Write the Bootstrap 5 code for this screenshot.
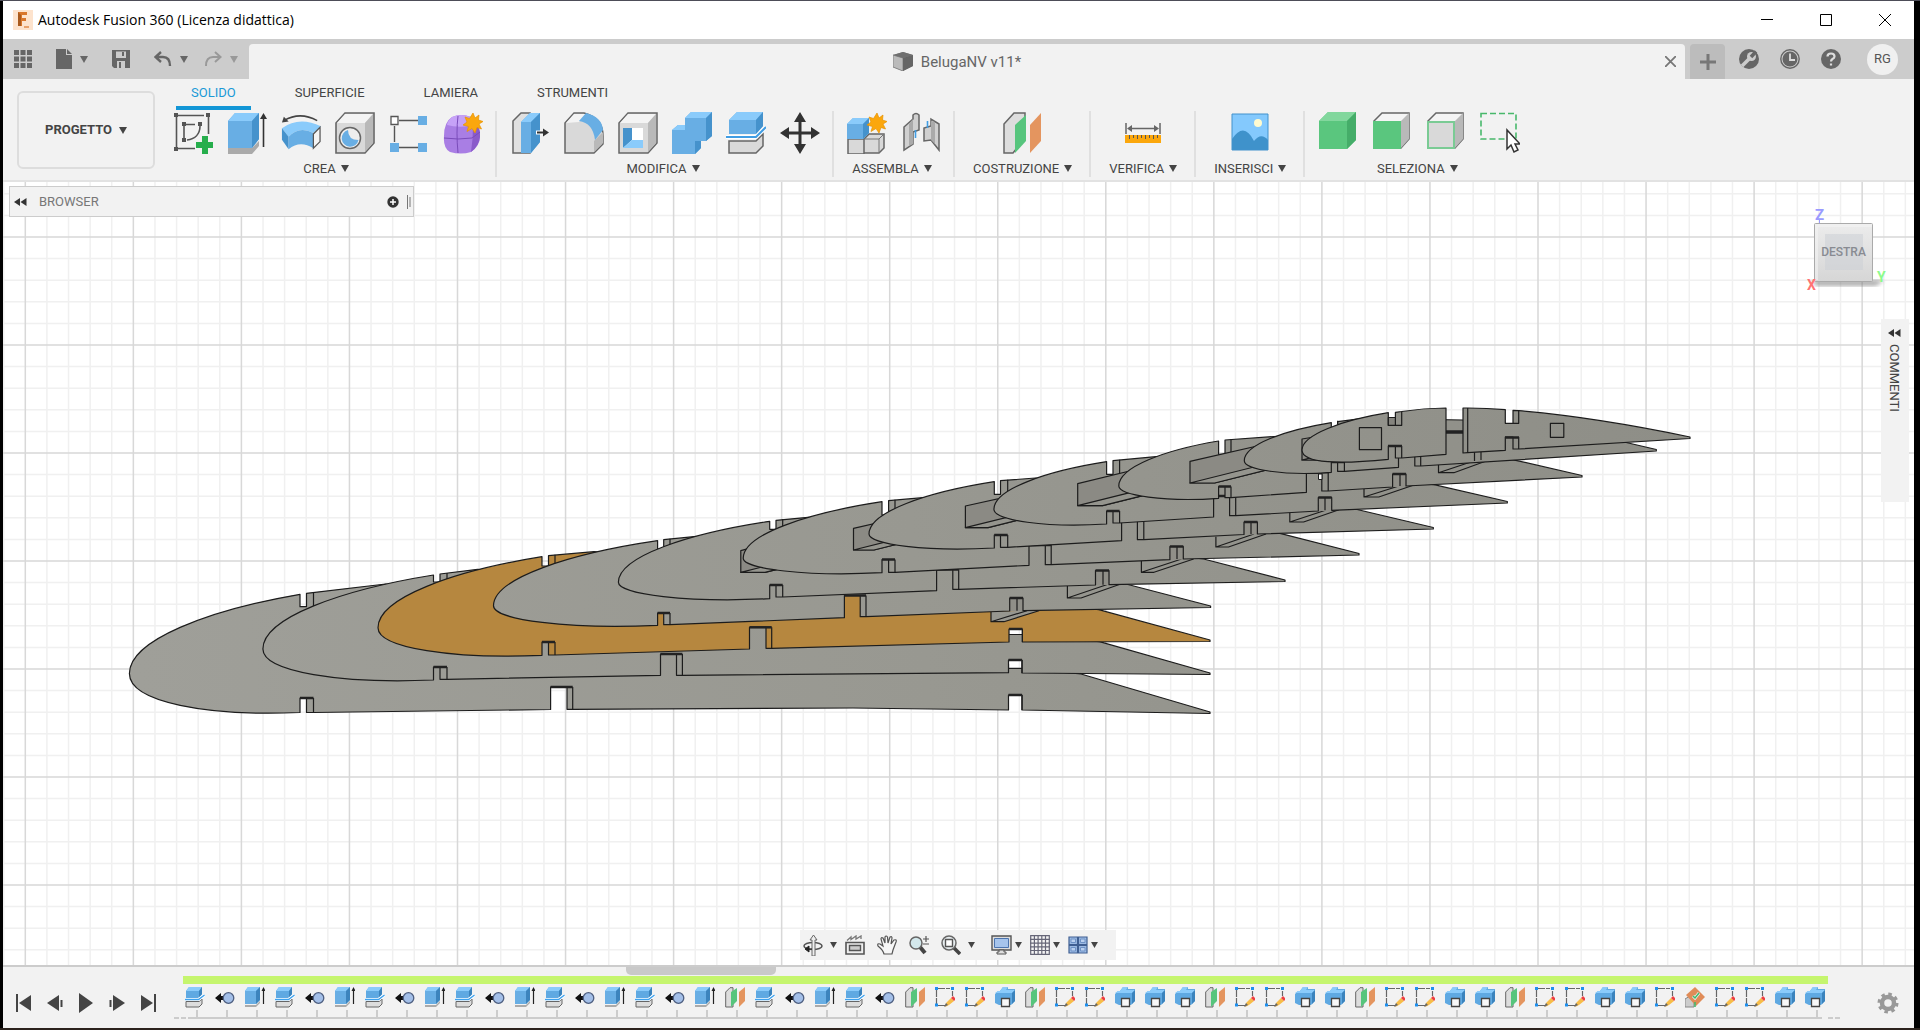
<!DOCTYPE html>
<html lang="it">
<head>
<meta charset="utf-8">
<meta name="viewport" content="width=device-width, initial-scale=1">
<title>Autodesk Fusion 360 (Licenza didattica)</title>
<link href="https://cdn.jsdelivr.net/npm/bootstrap@5.3.0/dist/css/bootstrap.min.css" rel="stylesheet">
<style>
  body { font-family: Roboto, "Liberation Sans", sans-serif; font-size: 13px; line-height: 16px; color: #444; background: #000; }
  svg { display: block; flex: none; }
  .frame { padding: 1px 6px 2px 3px; border-top: 0; background: linear-gradient(#4d4d58 1px, #000 1px calc(100% - 2px), #2b221d calc(100% - 2px)); }
  .tool { display: inline-flex; align-items: center; justify-content: center; padding: 0; border: 0; border-radius: 3px; background: transparent; color: inherit; font-size: 13px; line-height: 16px; }
  .titlebar { height: 38px; background: #fff; color: #000; font-family: "Open Sans", sans-serif; font-size: 14px; line-height: 20px; padding-left: 10px; gap: 5px; }
  .titlebar .tool { width: 59px; height: 38px; color: #000; }
  .docbar { height: 40px; background: #ccc; padding-top: 5px; color: #666; }
  .quick { width: 246px; padding: 0 8px 5px 11px; }
  .doctab { background: #f2f2f2; border-radius: 4px 4px 0 0; font-size: 15px; line-height: 20px; padding-right: 9px; }
  .newtab { width: 35px; height: 35px; background: #bcbcbc; border-radius: 4px 4px 0 0; margin: 0 14px 0 5px; color: #777; }
  .account { gap: 21px; padding: 0 16px 5px 0; }
  .avatar { width: 31px; height: 31px; border-radius: 50%; background: #f0f0f0; margin-left: 5px; font-size: 13px; color: #555; }
  .ribbon { background: #f2f2f2; height: 103px; border-bottom: 2px solid #e2e2e2; padding-left: 14px; }
  .workspace { width: 138px; height: 78px; border: 2px solid #ddd; border-radius: 6px; margin: 12px 5px 0 0; font-weight: 700; gap: 7px; color: #444; }
  .modes { height: 31px; gap: 29px; padding: 6px 0 0 16px; }
  .modes a { color: #444; padding: 0 15px 6px; border-bottom: 4px solid transparent; text-decoration: none; }
  .modes a.active { color: #1a9ad7; border-color: #1396d6; }
  .panel-group { height: 66px; border-right: 2px solid #e0e0e0; padding: 0 5px 0 6px; margin-top: 1px; }
  .panel-group.solo { padding: 0 17px 0 18px; }
  .panel-group.final { border-right: 0; }
  .panel-group .tool.big { width: 54px; height: 44px; }
  .panel-group .tool.name { gap: 5px; height: 20px; margin-top: 5px; padding-right: 4px; white-space: nowrap; }
  .panel-group.solo .tool.name { padding-right: 0; }
  .stage { background: #fff; min-height: 0; }
  .scene { position: absolute; inset: 0; width: 100%; height: 100%; }
  .browser { position: absolute; left: 6px; top: 4px; width: 405px; height: 31px; background: #f2f2f2; border: 1px solid #ccc; color: #777; padding: 0 2px 0 4px; gap: 12px; }
  .comments { position: absolute; right: 5px; top: 137px; width: 28px; height: 183px; background: #f2f2f2; padding: 10px 2px 0 0; gap: 7px; color: #444; }
  .comments .tool { writing-mode: vertical-rl; }
  .viewcube { position: absolute; right: 22px; top: 22px; }
  .navtools { position: absolute; left: 50%; bottom: 5px; margin-left: -159px; width: 316px; height: 30px; background: #f2f2f2; padding: 0 3px; gap: 8px; color: #444; }
  .navtools .tool { gap: 3px; }
  .navtools .tool.wide { gap: 7px; }
  .navtools .tool.plain { margin-right: 4px; }
  .timeline { background: #f2f2f2; height: 63px; border-top: 2px solid #ccc; }
  .scroller { position: absolute; left: 623px; top: 0; width: 150px; height: 8px; background: #c9c9c9; border-radius: 0 0 5px 5px; }
  .player { width: 180px; padding: 22px 0 0 5px; }
  .player .tool { width: 31px; height: 28px; flex: none; }
  .track { width: 1645px; padding-top: 9px; }
  .marker { height: 8px; background: #c5f56e; }
  .feature { width: 30px; height: 34px; flex: none; position: relative; padding: 3px 7px 0 0; }
  .feature::after { content: ""; position: absolute; left: 13px; bottom: 0; width: 2px; height: 8px; background: #ccc; }
  .rail { height: 2px; background: #ccc; margin: -1px 6px 0 5px; }
  .rail::before, .rail::after { content: ""; position: absolute; width: 12px; height: 2px; background: linear-gradient(90deg, #ccc 5px, transparent 5px 7px, #ccc 7px); }
  .rail::before { margin-left: -14px; }
  .rail::after { right: 74px; }
  .prefs { margin: 9px 15px 0 auto; }
</style>
</head>
<body class="overflow-hidden">

<svg width="0" height="0" class="position-absolute" aria-hidden="true">
  <defs>
    <linearGradient id="gCube" x1="0" y1="0" x2="0" y2="1"><stop offset="0" stop-color="#ececec"/><stop offset="1" stop-color="#d6d6d6"/></linearGradient>
    <linearGradient id="gMetal" gradientUnits="userSpaceOnUse" x1="130" y1="600" x2="1690" y2="440"><stop offset="0" stop-color="#9f9f99"/><stop offset=".5" stop-color="#989891"/><stop offset="1" stop-color="#8e8e87"/></linearGradient>
    <symbol id="caret" viewBox="0 0 8 7"><path d="M0 0h8L4 7z" fill="currentColor"/></symbol>
    <symbol id="star" viewBox="-10 -10 20 20"><path d="M0-10 2-5 6-8 5.500-3 10-1.500 6 1 8.500 6 4 4.500 2 10-1 5.500-6 8.500-4.500 3.500-10 2-6-1-8-6-3.500-4.500z" fill="#fba70d" stroke="#e69200" stroke-width=".7"/></symbol>

    <symbol id="i-sketch" viewBox="0 0 40 42"><g fill="none" stroke="#555" stroke-width="1.600"><path d="M5 3.500H31M3.500 5V35M5 36.500H22M35.500 5V22M12 12.500H22M11 14V26M27 14C27 22 22 27 14 28"/></g><g fill="#555"><path d="M1 1h4v4H1zM33 1h4v4h-4zM1 35h4v4H1zM9 10h4v4H9zM25 10h4v4h-4zM9 26h4v4H9z"/></g><path d="M29 24h6v6h6v6h-6v6h-6v-6h-6v-6h6z" fill="#26ae4c"/></symbol>
    <symbol id="i-extrude" viewBox="0 0 40 42"><path d="M1 36h24l7-7v5l-7 8H1z" fill="#aaa"/><path d="M1 9 8 1H32V27L25 36H1z" fill="#68aee4"/><path d="M1 9 8 1H32L25 9z" fill="#8acbfb"/><path d="M25 9 32 1V27L25 36z" fill="#4592cc"/><path d="M36.500 35V6" stroke="#333" stroke-width="1.600"/><path d="M36.500 1 40 7h-7z" fill="#333"/></symbol>
    <symbol id="i-revolve" viewBox="0 0 42 42"><path d="M3 8Q20-2 38 8" fill="none" stroke="#444" stroke-width="1.600"/><path d="M1 10 3 4 8 9z" fill="#444"/><path d="M1 16Q19 3 42 14L34 21Q19 13 8 25z" fill="#8acbfb"/><path d="M1 16 8 25V38L1 28z" fill="#4592cc"/><path d="M8 25Q19 13 34 21V37Q20 28 8 38z" fill="#68aee4"/><path d="M34 22 41 15V30L34 37z" fill="#f4f4f4" stroke="#555" stroke-width="1.300"/></symbol>
    <symbol id="i-hole" viewBox="0 0 40 42"><path d="M1 11 10 1H39V31L30 41H1z" fill="#d9d9d9" stroke="#666" stroke-width="1.600"/><path d="M2 11 10 2H38L30 11z" fill="#f4f4f4"/><path d="M30 11 38 2V31L30 40z" fill="#b9b9b9"/><circle cx="15" cy="26" r="10.500" fill="#eee" stroke="#666" stroke-width="1.500"/><path d="M13 18a8.500 8.500 0 1 0 10.500 10Q13 28 13 18z" fill="#68aee4"/></symbol>
    <symbol id="i-pattern" viewBox="0 0 38 42"><path d="M9 8.500H28M4.500 14V30M9 35.500H28" stroke="#555" stroke-width="1.400"/><path d="M1 4.500h7v8H1z" fill="#fff" stroke="#555" stroke-width="1.300"/><path d="M28 4h9v9h-9zM0 31h9v9H0zM28 31h9v9h-9z" fill="#68aee4"/></symbol>
    <symbol id="i-form" viewBox="0 0 40 42"><path d="M9 5Q18 1 28 5 37 12 37 24 37 34 28 40 18 43 7 40 0 36 1 24 1 10 9 5z" fill="#a97ee4"/><path d="M9 5Q18 1 28 5 33 9 27 14 14 16 4 13 5 8 9 5z" fill="#c6a2f7"/><path d="M30 15Q38 12 37 25 36 34 28 40 30 27 30 15z" fill="#8a5bca"/><path d="M15 4Q13 20 15 41M1 26Q15 28 29 26L37 20" fill="none" stroke="#7a4cba"/><use href="#star" x="20" y="1" width="20" height="20"/></symbol>
    <symbol id="i-press" viewBox="0 0 40 42"><path d="M3 9 11 1H20V41H3z" fill="#e0e0e0" stroke="#666" stroke-width="1.500"/><path d="M11 10 20 1H30V30L21 41H11z" fill="#68aee4"/><path d="M11 10 20 1H30L21 10z" fill="#8acbfb"/><path d="M21 10 30 1V30L21 41z" fill="#4592cc"/><path d="M26 20.500H35" stroke="#fff" stroke-width="4"/><path d="M27 20.500H35" stroke="#333" stroke-width="2"/><path d="M33 16.500 39 20.500 33 24.500z" fill="#333"/></symbol>
    <symbol id="i-fillet" viewBox="0 0 40 42"><path d="M1 11 10 1H20Q39 6 39 24V32L30 41H1z" fill="#d9d9d9" stroke="#666" stroke-width="1.500"/><path d="M2 11 10 2H22L15 10z" fill="#f4f4f4"/><path d="M30 29 39 20V31L30 40z" fill="#b9b9b9"/><path d="M15 9 22 1Q38 5 39 18L31 28Q29 11 15 9z" fill="#68aee4"/></symbol>
    <symbol id="i-shell" viewBox="0 0 40 42"><path d="M1 11 10 1H39V31L30 41H1z" fill="#d9d9d9" stroke="#666" stroke-width="1.500"/><path d="M2 11 10 2H38L30 11z" fill="#f4f4f4"/><path d="M30 11 38 2V31L30 40z" fill="#b9b9b9"/><path d="M5 16h20v20H5z" fill="#fff"/><path d="M5 16h9v12l-9 8z" fill="#4592cc"/><path d="M5 36 14 28H25v8z" fill="#8acbfb"/></symbol>
    <symbol id="i-combine" viewBox="0 0 40 42"><path d="M0 18 6 13H13V6L19 0H40V24L34 29H29V36L23 42H0z" fill="#68aee4"/><path d="M13 6 19 0H40L34 6zM0 18 6 13H13V18z" fill="#8acbfb"/><path d="M34 6 40 0V24L34 29zM23 29H29V36L23 42z" fill="#4592cc"/></symbol>
    <symbol id="i-split" viewBox="0 0 40 42"><path d="M3 8 11 0H37V14L30 22H3z" fill="#68aee4"/><path d="M3 8 11 0H37L30 8z" fill="#8acbfb"/><path d="M30 8 37 0V14L30 22z" fill="#4592cc"/><path d="M3 29H30L37 22V34L30 41H3z" fill="#d9d9d9" stroke="#666" stroke-width="1.500"/><path d="M0 25H30L40 15" fill="none" stroke="#fff" stroke-width="4"/><path d="M0 25H30L40 15" fill="none" stroke="#419de3" stroke-width="2"/></symbol>
    <symbol id="i-move" viewBox="0 0 40 42"><path d="M20 6V36M5 21H35" stroke="#333" stroke-width="3"/><path d="M20 0 26 10H14zM20 42 14 32h12zM0 21 9 15V27zM40 21 31 27V15z" fill="#333"/></symbol>
    <symbol id="i-component" viewBox="0 0 40 42"><path d="M1 27H17V42H1zM17 27 22 22H37V36L32 41H17z" fill="#d9d9d9" stroke="#666" stroke-width="1.500"/><path d="M17 27H32V41M32 27 37 22" fill="none" stroke="#777"/><path d="M0 12 6 6H22V21L16 27H0z" fill="#68aee4"/><path d="M0 12 6 6H22L16 12z" fill="#8acbfb"/><path d="M16 12 22 6V21L16 27z" fill="#4592cc"/><use href="#star" x="20" y="1" width="20" height="20"/></symbol>
    <symbol id="i-joint" viewBox="0 0 40 42"><path d="M3 15 12 7V3q3-3 6 0V18L12 20V32L3 38zM38 12 30 7V14L23 16V29L30 28 38 38z" fill="#d0d0d0" stroke="#666" stroke-width="1.500"/><path d="M12 7V32L8 34V12zM30 9V28L34 32V10z" fill="#aaa"/><path d="M14.500 18V26M26.500 9V16" stroke="#419de3" stroke-width="1.600"/></symbol>
    <symbol id="i-plane" viewBox="0 0 40 42"><path d="M1 12 11 1H22V26L10 41H1z" fill="#ddd" stroke="#666" stroke-width="1.500"/><path d="M12 13 23 3V29L12 41z" fill="#57c57d"/><path d="M27 13 38 1V29L27 41z" fill="#e4955f"/></symbol>
    <symbol id="i-measure" viewBox="0 0 40 42"><path d="M3 11V22M37 11V22M6 16.500H34" stroke="#666" stroke-width="1.500"/><path d="M4 16.500 9 13v7zM36 16.500 31 13v7z" fill="#666"/><path d="M2 23H38V31H2z" fill="#fba70d"/><path d="M6.500 23v4M10.500 23v3M14.500 23v4M18.500 23v3M22.500 23v4M26.500 23v3M30.500 23v4M34.500 23v3" stroke="#555"/></symbol>
    <symbol id="i-image" viewBox="0 0 40 42"><path d="M2 2H38V38H2z" fill="#84c9fd"/><circle cx="28" cy="11" r="4" fill="#fffbd0"/><path d="M2 27Q14 9 24 29 31 20 38 28V38H2z" fill="#3f92cb"/><path d="M2 2H38V38H2z" fill="none" stroke="#4292cc"/></symbol>
    <symbol id="i-selsolid" viewBox="0 0 40 42"><path d="M1 9 10 0H38V28L29 37H1z" fill="#5ac67e"/><path d="M1 9 10 0H38L29 9z" fill="#82d79d"/><path d="M29 9 38 0V28L29 37z" fill="#45ad69"/></symbol>
    <symbol id="i-selface" viewBox="0 0 40 42"><path d="M2 9 10 1H37V27L29 36z" fill="#f4f4f4" stroke="#666" stroke-width="1.500"/><path d="M29 9 37 1V27L29 36z" fill="#b9b9b9"/><path d="M1 9H29V37H1z" fill="#5ac67e"/></symbol>
    <symbol id="i-seledge" viewBox="0 0 40 42"><path d="M2 9 10 1H37V27L29 36z" fill="#f4f4f4" stroke="#666" stroke-width="1.500"/><path d="M29 9 37 1V27L29 36z" fill="#b9b9b9"/><path d="M2 10H28V36H2z" fill="#d9d9d9" stroke="#7acb94" stroke-width="2"/></symbol>
    <symbol id="i-selwin" viewBox="0 0 40 42"><path d="M1 1.500H36V27H1z" fill="none" stroke="#48b86b" stroke-width="1.600" stroke-dasharray="6 3"/><path d="M27 18V37L31 33 34 40 38 38 35 32H40z" fill="#fff" stroke="#333" stroke-width="1.500"/></symbol>

    <symbol id="t-split" viewBox="0 0 20 21"><path d="M1 4 4 0H17V7L14 11H1z" fill="#5fa9e2"/><path d="M1 4 4 0H17L14 4z" fill="#8acbfb"/><path d="M14 4 17 0V7L14 11z" fill="#3c84bd"/><path d="M1 14.500H14L17 12V17L14 20H1z" fill="#ddd" stroke="#666"/><path d="M0 12.500H13.500L19.500 8" fill="none" stroke="#fff" stroke-width="3"/><path d="M0 12.500H13.500L19.500 8" fill="none" stroke="#3da2ef" stroke-width="1.400"/></symbol>
    <symbol id="t-joint" viewBox="0 0 20 21"><path d="M0 11 6 6V9H11V13H6V16z" fill="#111"/><circle cx="13.500" cy="11" r="5.300" fill="#a3bfe8" stroke="#4e5f80" stroke-width="1.300"/></symbol>
    <symbol id="t-extrude" viewBox="0 0 20 21"><path d="M0 18H11L15 14V16L11 20H0z" fill="#aaa"/><path d="M0 4 3 0H15V13L11 17H0z" fill="#68aee4"/><path d="M0 4 3 0H15L11 4z" fill="#8acbfb"/><path d="M11 4 15 0V13L11 17z" fill="#3c84bd"/><path d="M18.500 17V2" stroke="#222" stroke-width="1.200"/><path d="M18.500 0 20.500 4h-4z" fill="#222"/></symbol>
    <symbol id="t-plane" viewBox="0 0 20 21"><path d="M.7 5 5 .7H8V20H.7z" fill="#ddd" stroke="#666"/><path d="M6 5 12 1V14L6 20z" fill="#57c57d"/><path d="M14 5 20 0V14L14 20z" fill="#e4955f"/></symbol>
    <symbol id="t-sketch" viewBox="0 0 20 21"><path d="M3 1.500H15M1.500 3V17M3 18.500H10M17.500 4V9" stroke="#666" stroke-width="1.200" stroke-dasharray="7 1"/><path d="M0 0h3v3H0zM16 0h3v3h-3zM0 16.500h3v3H0z" fill="#1e90ef"/><path d="M11 16 16 11 19 14 14 18 10 20z" fill="#f7bd48"/><path d="M16 11 18 9 21 12 19 14z" fill="#ee4040"/><path d="M9 20 11 16 13 18z" fill="#666"/></symbol>
    <symbol id="t-combine" viewBox="0 0 20 21"><path d="M0 7 3 4H5L8 0H13V2H20V14L16 18H4L0 16z" fill="#5fa9e2"/><path d="M5 4 8 0H13L11 3H20L17 6H0L3 4z" fill="#8acbfb"/><path d="M17 6 20 3V14L17 17z" fill="#3c84bd"/><path d="M6.500 11.500h8v8h-8z" fill="#f8f8f8" stroke="#444" stroke-width="1.300"/></symbol>
    <symbol id="t-angle" viewBox="0 0 20 21"><path d="M0 12 5 9 9 14V20H0z" fill="#ccc" stroke="#888"/><path d="M10 0 20 10 11 19 1 8z" fill="#e08c58"/><path d="M8 9 10 11 14 6" fill="none" stroke="#eee" stroke-width="3"/><path d="M8 9 10 11 14 6M10 15V20" fill="none" stroke="#3dbb6a" stroke-width="1.500"/></symbol>
  </defs>
</svg>

<div class="frame vh-100 d-flex flex-column">
  <header class="titlebar d-flex align-items-center">
    <svg width="20" height="20" viewBox="0 0 20 20"><rect width="20" height="20" fill="#fde3cd"/><path d="M5 16V2H14V5H9V8H13V11H9V16z" fill="#d9772b"/><path d="M5 16V2L8 5V16z" fill="#a95a1d"/><path d="M11 17h5" stroke="#e9a26c" stroke-width="2"/></svg>
    <span class="me-auto">Autodesk Fusion 360 (Licenza didattica)</span>
    <div class="d-flex">
      <button class="tool" aria-label="Riduci a icona"><svg width="12" height="12"><path d="M0 5.500H12" stroke="#000"/></svg></button>
      <button class="tool" aria-label="Ingrandisci"><svg width="12" height="12"><path d="M.5.500h11v11H.5z" fill="none" stroke="#000"/></svg></button>
      <button class="tool" aria-label="Chiudi"><svg width="12" height="12"><path d="M0 0 12 12M12 0 0 12" stroke="#000"/></svg></button>
    </div>
  </header>

  <div class="docbar d-flex">
    <div class="quick d-flex align-items-center">
      <button class="tool me-4" aria-label="Pannello dati"><svg width="18" height="18" viewBox="0 0 18 18" fill="#666"><path d="M0 0h5v5H0zM6.500 0h5v5h-5zM13 0h5v5h-5zM0 6.500h5v5H0zM6.500 6.500h5v5h-5zM13 6.500h5v5h-5zM0 13h5v5H0zM6.500 13h5v5h-5zM13 13h5v5h-5z"/></svg></button>
      <button class="tool me-4 gap-2" aria-label="File"><svg width="16" height="20" viewBox="0 0 16 20" fill="#666"><path d="M0 0H10V6H16V20H0zM11 0 16 5H11z"/></svg><svg width="8" height="7"><use href="#caret"/></svg></button>
      <button class="tool me-4" aria-label="Salva"><svg width="18" height="18" viewBox="0 0 18 18"><path d="M0 0H18V18H2L0 16z" fill="#666"/><path d="M4 1.500H14V8H4zM5 11H13V18H5z" fill="#ccc"/><path d="M10 2H12V6H10zM7 12H9V18H7z" fill="#666"/></svg></button>
      <button class="tool me-3 gap-2" aria-label="Annulla"><svg width="18" height="16" viewBox="0 0 18 16"><path d="M7 1 1.500 6 7 11M2 6H9Q16 6 16 15" fill="none" stroke="#666" stroke-width="2.400"/></svg><svg width="8" height="7"><use href="#caret"/></svg></button>
      <button class="tool gap-2" aria-label="Ripeti" style="color:#999"><svg width="18" height="16" viewBox="0 0 18 16"><path d="M11 1 16.500 6 11 11M16 6H9Q2 6 2 15" fill="none" stroke="#999" stroke-width="2"/></svg><svg width="8" height="7"><use href="#caret"/></svg></button>
    </div>
    <div class="doctab flex-grow-1 d-flex align-items-center">
      <span class="mx-auto d-flex align-items-center gap-2"><svg width="20" height="19" viewBox="0 0 20 19"><path d="M0 3 10 0 20 3V14L10 19 0 15z" fill="#777"/><path d="M0 3 10 6V19L0 15z" fill="#bbb" stroke="#888"/><path d="M10 6 20 3V14L10 19z" fill="#666"/><path d="M0 3 10 0 20 3 10 6z" fill="#707070"/></svg>BelugaNV v11*</span>
      <button class="tool" aria-label="Chiudi scheda"><svg width="11" height="11"><path d="M0 0 11 11M11 0 0 11" stroke="#777" stroke-width="1.800"/></svg></button>
    </div>
    <button class="tool newtab" aria-label="Nuovo progetto"><svg width="16" height="16"><path d="M8 0V16M0 8H16" stroke="#777" stroke-width="3"/></svg></button>
    <div class="account d-flex align-items-center">
      <button class="tool" aria-label="Estensioni"><svg width="20" height="20" viewBox="0 0 20 20"><circle cx="10" cy="10" r="10" fill="#666"/><path d="M3 17 11 9" stroke="#ccc" stroke-width="3.500"/><circle cx="12.500" cy="7.500" r="4.500" fill="#ccc"/><path d="M12 8 17 2.500" stroke="#666" stroke-width="3.500"/></svg></button>
      <button class="tool" aria-label="Stato processi"><svg width="20" height="20" viewBox="0 0 20 20"><circle cx="10" cy="10" r="9.200" fill="none" stroke="#666" stroke-width="1.400"/><circle cx="10" cy="10" r="7.500" fill="#666"/><path d="M10 4.500V11H15" fill="none" stroke="#ddd" stroke-width="1.800"/></svg></button>
      <button class="tool" aria-label="Guida"><svg width="20" height="20" viewBox="0 0 20 20"><circle cx="10" cy="10" r="10" fill="#666"/><path d="M6.500 7.500Q6.500 4.500 10 4.500T13.500 7.500Q13.500 9 11.500 10 10 11 10 12.500M10 14.500V16.500" fill="none" stroke="#ddd" stroke-width="2.200"/></svg></button>
      <button class="tool avatar" aria-label="Account">RG</button>
    </div>
  </div>

  <div class="ribbon d-flex">
    <button class="tool workspace">PROGETTO <svg width="8" height="7"><use href="#caret"/></svg></button>
    <div>
      <nav class="modes d-flex">
        <a href="#" class="active">SOLIDO</a><a href="#">SUPERFICIE</a><a href="#">LAMIERA</a><a href="#">STRUMENTI</a>
      </nav>
      <div class="d-flex" id="panels"></div>
    </div>
  </div>

  <main class="stage position-relative flex-grow-1">
    <svg class="scene" viewBox="3 182 1911 783" preserveAspectRatio="xMidYMid slice" role="img" aria-label="Centine del modello BelugaNV">
      <g id="grid"></g>
      <g id="model" stroke-linejoin="round"></g>
    </svg>

    <div class="browser d-flex align-items-center">
      <button class="tool" aria-label="Comprimi browser"><svg width="13" height="8"><path d="M6 0V8L0 4zM12.500 0V8L6.500 4z" fill="#333"/></svg></button>
      <span class="me-auto">BROWSER</span>
      <div class="d-flex align-items-center gap-2">
        <button class="tool" aria-label="Espandi"><svg width="12" height="12"><circle cx="6" cy="6" r="5.700" fill="#333"/><path d="M6 3V9M3 6H9" stroke="#fff" stroke-width="1.500"/></svg></button>
        <svg width="4" height="14"><path d="M.5 0V14M3 2V12" stroke="#777"/></svg>
      </div>
    </div>

    <svg class="viewcube" width="94" height="94" viewBox="0 0 94 94" font-family="Roboto, sans-serif" font-weight="700">
      <filter id="soft"><feGaussianBlur stdDeviation="2"/></filter>
      <path d="M14 76H86L78 82H18z" fill="#777" opacity=".6" filter="url(#soft)"/>
      <rect x="16.500" y="19.500" width="58" height="58" rx="1" fill="url(#gCube)" stroke="#aaa"/>
      <path d="M17 20H74V23H20V76H17z" fill="#f4f4f4" opacity=".6"/><rect x="27" y="30" width="38" height="36" fill="#ccd0d6" opacity=".55"/>
      <text x="45.500" y="52" font-size="12" font-weight="500" fill="#888b92" text-anchor="middle">DESTRA</text>
      <text x="17" y="16" font-size="15" fill="#9a9aff">Z</text><path d="M21.500 16V19" stroke="#9a9aff"/>
      <text x="9" y="86" font-size="14" fill="#ff7272">X</text>
      <text x="79" y="78" font-size="14" fill="#8cfb8c">Y</text>
    </svg>

    <div class="comments d-flex flex-column align-items-center">
      <svg width="13" height="8"><path d="M6 0V8L0 4zM12.500 0V8L6.500 4z" fill="#333"/></svg>
      <button class="tool">COMMENTI</button>
    </div>

    <div class="navtools d-flex align-items-center">
      <button class="tool wide" aria-label="Orbita"><svg width="20" height="21" viewBox="0 0 20 21"><ellipse cx="10" cy="11" rx="9" ry="3.500" fill="none" stroke="#555" stroke-width="1.600"/><path d="M9 21V5H7L10.500 0 14 5H12V21z" fill="#eee" stroke="#666"/><path d="M2 14 6 11V17zM5 14H9" fill="#222" stroke="#222"/></svg><svg width="7" height="6"><use href="#caret"/></svg></button>
      <button class="tool plain" aria-label="Guarda"><svg width="20" height="20" viewBox="0 0 20 20"><path d="M1 7.500H19V19H1z" fill="#eee" stroke="#555" stroke-width="1.600"/><path d="M4.500 10.500H15.500V15.500H4.500z" fill="#ccc" stroke="#555" stroke-width="1.400"/><path d="M2 5.500 6 2V4.500L11 1V4L16 1V4" fill="none" stroke="#777" stroke-width="1.300"/></svg></button>
      <button class="tool plain" aria-label="Pan"><svg width="20" height="20" viewBox="0 0 20 20"><path d="M7 19Q6 15 1 11 0 8 3 9L6 11 4 4Q4 2 6 3L8 8 8 2Q9 0 10.500 2L11 8 13 2Q15 1 15 3L14 9 17 5Q20 4 19 7L16 15 15 19z" fill="#f7f7f7" stroke="#555" stroke-width="1.200"/></svg></button>
      <button class="tool plain" aria-label="Zoom"><svg width="20" height="20" viewBox="0 0 20 20"><path d="M11 12 16 18" stroke="#444" stroke-width="4"/><circle cx="7" cy="8" r="6" fill="#d3e8ec" stroke="#666" stroke-width="1.500"/><path d="M14 4H20M17 1V7M14 9H20" stroke="#555" stroke-width="1.200"/></svg></button>
      <button class="tool wide me-2" aria-label="Adatta"><svg width="20" height="20" viewBox="0 0 20 20"><path d="M13 13 19 19" stroke="#444" stroke-width="3.500"/><circle cx="8" cy="8" r="7" fill="#e8eef0" stroke="#666" stroke-width="1.500"/><path d="M4.500 4.500h7v7h-7z" fill="#fff" stroke="#555" stroke-width="1.400"/></svg><svg width="7" height="6"><use href="#caret"/></svg></button>
      <button class="tool" aria-label="Visualizzazione"><svg width="21" height="20" viewBox="0 0 21 20"><path d="M1 1H20V15H1z" fill="#ddd" stroke="#555" stroke-width="1.400"/><path d="M3.500 3.500H17.500V12.500H3.500z" fill="#a6c4ec" stroke="#4c74ae"/><path d="M8 15H13V17H15V19H6V17H8z" fill="#ddd" stroke="#555"/></svg><svg width="7" height="6"><use href="#caret"/></svg></button>
      <button class="tool" aria-label="Griglia"><svg width="20" height="20" viewBox="0 0 20 20"><path d="M.7.700H19.300V19.300H.7z" fill="#f4f4f4"/><path d="M.7.700H19.300V19.300H.7zM4.400 0V20M8.100 0V20M11.800 0V20M15.500 0V20M0 4.400H20M0 8.100H20M0 11.800H20M0 15.500H20" fill="none" stroke="#667" stroke-width="1.200"/></svg><svg width="7" height="6"><use href="#caret"/></svg></button>
      <button class="tool" aria-label="Finestre"><svg width="20" height="18" viewBox="0 0 20 18"><path d="M1 1H9.500V8.500H1zM10.500 1H19V8.500H10.500zM1 9.500H9.500V17H1zM10.500 9.500H19V17H10.500z" fill="#9dbbe4" stroke="#3f5f92" stroke-width="1.200"/><path d="M3 3H7.500V6.500H3zM12.500 3H17V6.500H12.500zM3 11.500H7.500V15H3zM12.500 11.500H17V15H12.500z" fill="#b9d0f0" stroke="#6e92c6"/></svg><svg width="7" height="6"><use href="#caret"/></svg></button>
    </div>
  </main>

  <footer class="timeline position-relative d-flex align-items-start">
    <div class="scroller"></div>
    <div class="player d-flex">
      <button class="tool" aria-label="Inizio"><svg width="16" height="18" fill="#444"><path d="M0 0h2v18H0zM15 1V17L3 9z"/></svg></button>
      <button class="tool" aria-label="Passo indietro"><svg width="16" height="18" fill="#444"><path d="M12 1V17L0 9zM13.500 6h2v7h-2z"/></svg></button>
      <button class="tool" aria-label="Riproduci"><svg width="16" height="20" fill="#444"><path d="M1 0 15 10 1 20z"/></svg></button>
      <button class="tool" aria-label="Passo avanti"><svg width="16" height="18" fill="#444"><path d="M4 1V17L16 9zM.5 6h2v7h-2z"/></svg></button>
      <button class="tool" aria-label="Fine"><svg width="16" height="18" fill="#444"><path d="M14 0h2v18H14zM1 1V17L13 9z"/></svg></button>
    </div>
    <div class="track">
      <div class="marker"></div>
      <div class="d-flex" id="features"></div>
      <div class="rail"></div>
    </div>
    <button class="tool prefs pt-3" aria-label="Impostazioni"><svg width="22" height="22" viewBox="-11 -11 22 22"><circle r="6" fill="none" stroke="#999" stroke-width="4.500"/><circle r="9" fill="none" stroke="#999" stroke-width="3" stroke-dasharray="3.500 3.570"/></svg></button>
  </footer>
</div>

<script src="https://cdn.jsdelivr.net/npm/bootstrap@5.3.0/dist/js/bootstrap.bundle.min.js"></script>
<script>
  // Ribbon panels
  const panels = [
    ['CREA', 'sketch extrude revolve hole pattern form'],
    ['MODIFICA', 'press fillet shell combine split move'],
    ['ASSEMBLA', 'component joint'],
    ['COSTRUZIONE', 'plane'],
    ['VERIFICA', 'measure'],
    ['INSERISCI', 'image'],
    ['SELEZIONA', 'selsolid selface seledge selwin']
  ];
  document.getElementById('panels').innerHTML = panels.map(([name, icons], i) => {
    const list = icons.split(' ');
    const kind = list.length === 1 ? ' solo' : (i === panels.length - 1 ? ' final' : '');
    return `<div class="panel-group${kind} d-flex flex-column align-items-center"><div class="d-flex">` +
      list.map(k => `<button class="tool big" aria-label="${name.toLowerCase()} ${k}"><svg width="40" height="42"><use href="#i-${k}"/></svg></button>`).join('') +
      `</div><button class="tool name">${name}<svg width="8" height="7"><use href="#caret"/></svg></button></div>`;
  }).join('');

  // Timeline features: s split, j joint, e extrude, p plane, k sketch, c combine, a angled plane
  const kinds = { s: 'split', j: 'joint', e: 'extrude', p: 'plane', k: 'sketch', c: 'combine', a: 'angle' };
  document.getElementById('features').innerHTML = [...('sje'.repeat(6) + 'psjesjpkkcpkkcccpkkccpkkccpkkcckakkcc')]
    .map(f => `<button class="tool feature align-items-start" aria-label="${kinds[f]}"><svg width="20" height="21"><use href="#t-${kinds[f]}"/></svg></button>`).join('');

  // Construction grid
  let minor = '', major = '';
  for (let i = -40; i < 130; i++) {
    const x = 25.3 + i * 21.61, y = 237 + i * 21.6;
    const v = `M${x} -400V1500`, h = `M-900 ${y}H2800`;
    if (i % 5) minor += v + h; else major += v + h;
  }
  document.getElementById('grid').innerHTML = `<path d="${minor}" stroke="#f0f0f0" stroke-width="1.5"/><path d="${major}" stroke="#d8d8d8" stroke-width="1.5"/>`;

  // Wing ribs, from back to front.
  // n nose, s top slot [x, y, right, strip, bottom], t top points, tip, notches [left, right, strip, top, yLeft, yRight] from rear to front
  const ribs = [
    { n: [129.4, 673.5], s: [300, 594.3, 306.5, 313.5, 606.7], t: [[385.7, 584], [1008.5, 664], [1008.5, 668.3], [1022, 668.3], [1081, 674]], tip: [1210, 712],
      b: [[1008.5, 1022, 1022, 695, 710, 710], [550.6, 567, 572.7, 687, 709.5, 709.3], [300, 306.5, 313.5, 698, 712.5, 712.5]], mid: [853, 708] },
    { n: [262.9, 649], s: [433.5, 575, 440, 447, 582], t: [[477.6, 569.3], [1008.5, 631], [1008.5, 634.5], [1022, 634.5], [1099.5, 641.7]], tip: [1210, 673],
      b: [[1008.5, 1022, 1022, 660, 672.7, 673], [660.5, 676.5, 682.4, 654, 675.3, 675.3], [433.5, 440, 447, 667, 680, 679.3]] },
    { n: [378, 627.7], s: [542, 556.7, 548.5, 555, 566], t: [[594, 551.7], [1098.7, 609.7]], tip: [1210, 640], fill: '#b6873f',
      b: [[1009, 1022.4, 1022.4, 629, 642, 642], [749.5, 766, 771.7, 627.3, 649, 648.3], [542, 548.5, 555, 642, 655.3, 655]], strip: [991, 612, 621.7, 1004, 1039, 610.7] },
    { n: [493.5, 605.7], s: [657.6, 540.7, 663.7, 670, 549], t: [[694, 536.7], [1126, 584]], tip: [1210.6, 606],
      b: [[1009.7, 1023, 1017, 598, 611, 610.7], [844.4, 860.2, 866, 595.5, 617.7, 616.7], [657.6, 663.7, 670, 613, 625.3, 624.7]], strip: [1067.4, 586, 598, 1081, 1120, 584.3] },
    { n: [618.4, 582.3], s: [769.7, 521.3, 776, 782.7, 529.3], t: [[808, 517.3], [1203.6, 559]], tip: [1285, 580],
      b: [[1095.5, 1109, 1103, 570.5, 585, 584.7], [936.6, 952.8, 958.7, 569.5, 590.7, 589.3], [769.7, 776, 782.7, 585, 598.7, 597]], strip: [1141.4, 561, 572.3, 1154, 1193.6, 559], hole: [740.8, 550.7, 572.3, 765, 572.3, 780, 540] },
    { n: [743.2, 558.3], s: [882, 501.7, 888.6, 895, 515], t: [[922.7, 497.7], [1280, 533.3]], tip: [1359, 553.5],
      b: [[1169.9, 1183.3, 1177, 546.5, 559.7, 559], [1029, 1045.3, 1051.2, 545, 565.3, 564.7], [882, 888.6, 895, 559.5, 572.7, 572.3]], strip: [1215.9, 536.7, 547, 1228.5, 1266, 534], hole: [853.5, 528.3, 550, 874, 550, 890, 520] },
    { n: [869, 534], s: [994.3, 481.7, 1000.5, 1007.7, 494.3], t: [[1035.4, 478], [1355, 509]], tip: [1433.3, 527.5],
      b: [[1244, 1257.4, 1251, 522, 534.5, 534], [1121.6, 1137.4, 1143.8, 520, 540.7, 539.7], [994.3, 1000.5, 1007.7, 535, 548, 547.3]], strip: [1289.8, 512.3, 522, 1303.6, 1339, 509.7], hole: [965.4, 506, 527.7, 988, 527.7, 1020, 494] },
    { n: [993.9, 509.3], s: [1106.6, 461.7, 1113, 1119.6, 474.3], t: [[1156, 456.7], [1434, 484.7]], tip: [1507.3, 501.5],
      b: [[1318.3, 1331.7, 1325, 497.5, 511, 510.3], [1213.6, 1229.6, 1235.7, 496, 517, 515.7], [1106.6, 1113, 1119.6, 511, 524, 523]], strip: [1364, 489, 497, 1378.8, 1414, 485], hole: [1077.7, 483.7, 505.7, 1102.6, 505.7, 1142, 468] },
    { n: [1118.8, 486], s: [1218.6, 441, 1225, 1231, 454.3], t: [[1278, 436.3], [1511.2, 459.3]], tip: [1582, 475.5],
      b: [[1392.6, 1406, 1400, 474, 487, 486], [1306.4, 1321.8, 1328.2, 472, 492.3, 491], [1218.6, 1225, 1231, 486.5, 498.3, 497.7]], strip: [1438.5, 464.3, 472.7, 1453.9, 1489.5, 459.7], hole: [1190, 461.3, 483, 1214.7, 483, 1266, 444] },
    { n: [1244.3, 460.7], s: [1331.3, 422.7, 1337.6, 1337.6, 428], t: [[1363, 418.3], [1463, 420], [1624, 442]], tip: [1656.3, 449.5],
      b: [[1398.5, 1414.8, 1420.7, 450, 467.3, 466], [1331.3, 1337.6, 1344.4, 462, 472.3, 471.3]], hole: [1302, 439, 460, 1320, 460, 1320, 436] }
  ];
  const edge = 'stroke="#1c1c1c" stroke-width="1.2"';
  const metal = 'url(#gMetal)';
  const nose = (n, s, by) => {
    const w = s[0] - n[0], up = n[1] - s[1], dn = by - n[1];
    return [`C${n[0]} ${n[1] - up * .42} ${n[0] + w * .46} ${s[1] + up * .2} ${s[0]} ${s[1]}`,
            `C${n[0] + w * .46} ${by + 4} ${n[0]} ${n[1] + dn * .74} ${n[0]} ${n[1]}`];
  };
  let out = '';
  ribs.forEach((r, i) => {
    const [top, bottom] = nose(r.n, r.s, r.b[r.b.length - 1][4]);
    const [sx, sy, sr, st, sb] = r.s;
    // The rear notch of the middle ribs looks onto the side of the rib behind
    if (i > 2 && i < 9) { const q = r.b[0]; out += `<rect x="${q[0]}" y="${q[3]}" width="${q[1] - q[0]}" height="${q[4] - q[3]}" fill="#908f88"/>`; }
    let d = `M${r.n}${top}V${sb}H${sr}V${sy - 1}`;
    r.t.forEach(p => d += `L${p}`);
    d += `L${r.tip}v1.500`;
    let marks = `M${st} ${sy - 2}V${sb}`;
    r.b.forEach((q, j) => {
      const [l, rt, sp, ty, yl, yr] = q;
      d += `L${Math.max(rt, sp)} ${yr}H${rt}V${ty}H${l}V${yl}`;
      if (j === 0 && r.mid) d += `L${r.mid}`;
      marks += `M${sp} ${ty}V${yr}`;
    });
    d += bottom + 'z';
    out += `<path d="${d}" fill="${r.fill || metal}" ${edge}/><path d="${marks}" fill="none" ${edge}/>`;
    out += r.b.map(q => `<path d="M${q[0]} ${q[3]}H${Math.max(q[1], q[2])}" stroke="#222" stroke-width="2.5"/>`).join('');
    if (r.strip) {
      const [x, y1, y2, x2, x3, y3] = r.strip;
      out += `<path d="M${x} ${y1}V${y2}H${x2}L${x3} ${y3}L${x3 - 12} ${y3}z" fill="${metal}"/><path d="M${x} ${y1}V${y2}H${x2}L${x3} ${y3}M${x} ${y2}L${x3 - 12} ${y3}" fill="none" ${edge}/>`;
    }
    if (r.hole) {
      const [x, y1, y2, x2, y4, x3, y3] = r.hole;
      out += `<path d="M${x} ${y1}V${y2}H${x2}L${x3 + 20} ${y2 - (x3 + 20 - x2) * .25}L${x3} ${y3}z" fill="#8b8a84" ${edge}/><path d="M${x} ${y2}H${x2}L${x3 + 20} ${y2 - (x3 + 20 - x2) * .25}V${y2 - (x3 + 20 - x) * .25}z" fill="#95958e" ${edge}/>`;
    }
  });
  // White sliver behind the ninth rib
  out += `<path d="M1318.500 474H1322V479.500H1318.500z" fill="#fff" stroke="#1c1c1c"/>`;
  // Rib end strip, then the front rib in two halves
  out += `<path d="M1474.500 450V461M1481 450V460" ${edge}/><path d="M1446 432H1467" stroke="#222" stroke-width="3.500"/>`;
  out += `<path d="M1302 450C1302 435 1342 420 1388.300 412.700V425.300H1395.400V412.300L1401.700 411.500Q1424 408 1446 408V454.300L1401.700 458H1395.400V446H1388.300V459.300C1342 464 1302 464 1302 450z" fill="${metal}" ${edge}/>`;
  out += `<path d="M1463 408H1467.700Q1487 408 1505.300 409.700V423.300H1513V410.300L1518.700 410.700Q1594 417 1690 437V438.500L1518.700 449H1513V437H1505.300V450.300L1467.700 452.700 1463 453z" fill="${metal}" ${edge}/>`;
  out += `<path d="M1388.300 417.500H1395.400V425.300H1388.300z" fill="#85847e" ${edge}/>`;
  out += `<path d="M1401.700 411.500V425.300H1395M1401.700 446V458M1467.700 408V453M1518.700 410.700V423.300H1513M1518.700 437V449M1359.400 427.700H1381.500V449.700H1359.400zM1550.400 423.300H1563.800V437.300H1550.400z" fill="none" ${edge}/><path d="M1388 446H1402M1505 437.500H1519" stroke="#222" stroke-width="2.5"/>`;
  document.getElementById('model').innerHTML = out;
</script>
</body>
</html>
